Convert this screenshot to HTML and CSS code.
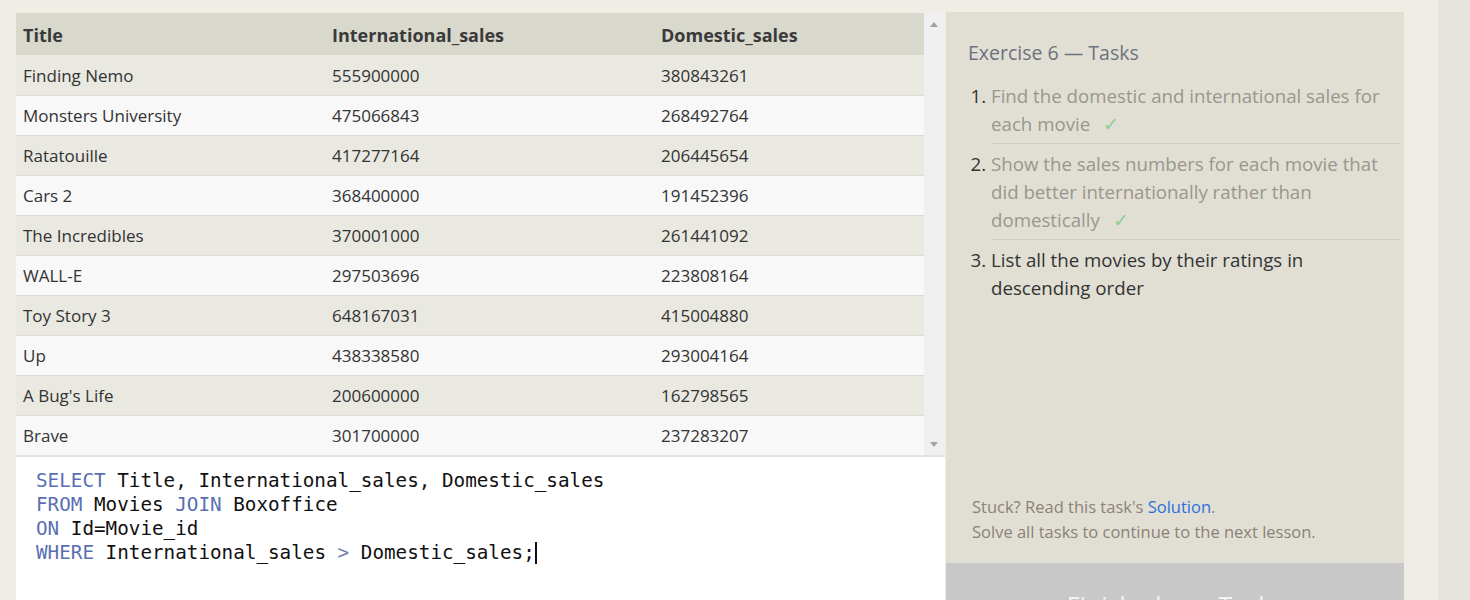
FILE: index.html
```html
<!DOCTYPE html>
<html>
<head>
<meta charset="utf-8">
<link rel="stylesheet" href="styles.css">
</head>
<body>
<div class="page">
  <div class="workspace">
    <div class="results">
      <div class="table-scroll">
        <table class="data">
          <colgroup><col class="c1"><col class="c2"><col class="c3"></colgroup>
          <thead>
            <tr><th>Title</th><th>International_sales</th><th>Domestic_sales</th></tr>
          </thead>
          <tbody>
            <tr><td>Finding Nemo</td><td>555900000</td><td>380843261</td></tr>
            <tr><td>Monsters University</td><td>475066843</td><td>268492764</td></tr>
            <tr><td>Ratatouille</td><td>417277164</td><td>206445654</td></tr>
            <tr><td>Cars 2</td><td>368400000</td><td>191452396</td></tr>
            <tr><td>The Incredibles</td><td>370001000</td><td>261441092</td></tr>
            <tr><td>WALL-E</td><td>297503696</td><td>223808164</td></tr>
            <tr><td>Toy Story 3</td><td>648167031</td><td>415004880</td></tr>
            <tr><td>Up</td><td>438338580</td><td>293004164</td></tr>
            <tr><td>A Bug's Life</td><td>200600000</td><td>162798565</td></tr>
            <tr><td>Brave</td><td>301700000</td><td>237283207</td></tr>
          </tbody>
        </table>
        <div class="scrollbar">
          <span class="arrow up"></span>
          <span class="arrow down"></span>
        </div>
      </div>
      <div class="editor">
        <div class="code-line"><span class="kw">SELECT</span> Title, International_sales, Domestic_sales</div>
        <div class="code-line"><span class="kw">FROM</span> Movies <span class="kw">JOIN</span> Boxoffice</div>
        <div class="code-line"><span class="kw">ON</span> Id=Movie_id</div>
        <div class="code-line"><span class="kw">WHERE</span> International_sales <span class="op">&gt;</span> Domestic_sales;<span class="cursor"></span></div>
      </div>
    </div>
    <div class="tasks-panel">
      <div class="tasks-body">
        <h2 class="tasks-title">Exercise 6 — Tasks</h2>
        <ol class="task-list">
          <li class="task done"><span class="task-text">Find the domestic and international sales for each movie</span><span class="check">✓</span></li>
          <li class="task done"><span class="task-text">Show the sales numbers for each movie that did better internationally rather than domestically</span><span class="check">✓</span></li>
          <li class="task current"><span class="task-text">List all the movies by their ratings in descending order</span></li>
        </ol>
        <div class="hint">
          <p>Stuck? Read this task's <a class="solution" href="#">Solution</a>.</p>
          <p>Solve all tasks to continue to the next lesson.</p>
        </div>
      </div>
      <div class="finish-btn">Finish above Tasks</div>
    </div>
    <div class="gutter"></div>
    <div class="side-strip"></div>
  </div>
</div>
</body>
</html>
```
FILE: styles.css
```css
html, body {
  margin: 0;
  padding: 0;
  height: 600px;
  overflow: hidden;
  background: #efede6;
}

.page {
  font-family: "Open Sans", "Noto Sans", sans-serif;
  color: #333;
}

.workspace {
  display: flex;
  align-items: flex-start;
  padding-top: 12px;
  height: 588px;
}

.results {
  margin-left: 16px;
  width: 929px;
  display: flex;
  flex-direction: column;
  padding-top: 1px;
}

.table-scroll {
  display: flex;
  height: 442px;
  overflow: hidden;
  border-bottom: 2px solid #e6e4da;
}

.data {
  width: 908px;
  border-collapse: collapse;
  table-layout: fixed;
  font-size: 17px;
}

.c1 { width: 309px; }
.c2 { width: 329px; }
.c3 { width: 270px; }

.data th {
  background: #d9d8cc;
  text-align: left;
  font-weight: 700;
  font-size: 18px;
  color: #3a3a3a;
  height: 42px;
  padding: 2px 7px 0 7px;
  box-sizing: border-box;
}

.data td {
  height: 40px;
  padding: 0 7px;
  box-sizing: border-box;
  color: #333;
  box-shadow: inset 0 1px 0 #dddbd3;
}

.data tbody tr:nth-child(odd) td { background: #e9e8e1; }
.data tbody tr:nth-child(even) td { background: #f8f8f8; }
.data tbody tr:first-child td { box-shadow: none; }

.scrollbar {
  width: 21px;
  flex: none;
  background: #f0f0f0;
  position: relative;
}

.arrow {
  position: absolute;
  left: 6px;
  width: 0;
  height: 0;
  border-left: 4.5px solid transparent;
  border-right: 4.5px solid transparent;
}
.arrow.up { top: 9px; border-bottom: 5px solid #a3a3a3; }
.arrow.down { bottom: 8px; border-top: 5px solid #a3a3a3; }

.editor {
  background: #fff;
  height: 160px;
  padding: 12px 0 0 20px;
  box-sizing: border-box;
  font-family: "DejaVu Sans Mono", "Liberation Mono", monospace;
  font-size: 19.27px;
  line-height: 24px;
  color: #111;
}

.code-line { white-space: pre; }

.kw { color: #5a6fb3; }
.op { color: #7482b2; }

.cursor {
  display: inline-block;
  width: 2px;
  height: 22px;
  background: #111;
  vertical-align: -5px;
}

.tasks-panel {
  margin-left: 1px;
  width: 458px;
  height: 633px;
  background: #e1dfd4;
  display: flex;
  flex-direction: column;
}

.tasks-body {
  flex: 1;
  display: flex;
  flex-direction: column;
  padding: 28px 4px 0 22px;
}

.tasks-title {
  margin: 0;
  font-size: 19.5px;
  font-weight: 400;
  line-height: 26px;
  color: #6c7280;
}

.task-list {
  margin: 16px 0 0 0;
  padding: 0 0 0 23px;
  font-size: 18.7px;
  line-height: 28px;
}

.task {
  color: #333;
  padding: 0 0 5px 0;
}
.task + .task {
  border-top: 1px solid #d0cec3;
  padding-top: 6px;
}
.task::marker { color: #333; }

.task.done .task-text { color: #99968e; }
.task.current .task-text { color: #333; }

.check {
  color: #8ccf97;
  margin-left: 13px;
}

.hint {
  margin-top: auto;
  padding: 0 0 19px 4px;
  font-size: 16.5px;
  line-height: 25px;
  color: #8a8278;
}
.hint p { margin: 0; }

.solution {
  color: #2f6fdc;
  text-decoration: none;
}

.finish-btn {
  height: 82px;
  flex: none;
  background: #c8c8c8;
  color: #f3f3f3;
  font-size: 25px;
  line-height: 84px;
  text-align: center;
}

.gutter {
  width: 34px;
  flex: none;
}

.side-strip {
  flex: 1;
  align-self: stretch;
  margin-top: -12px;
  height: 600px;
  background: #e7e4df;
}
```
